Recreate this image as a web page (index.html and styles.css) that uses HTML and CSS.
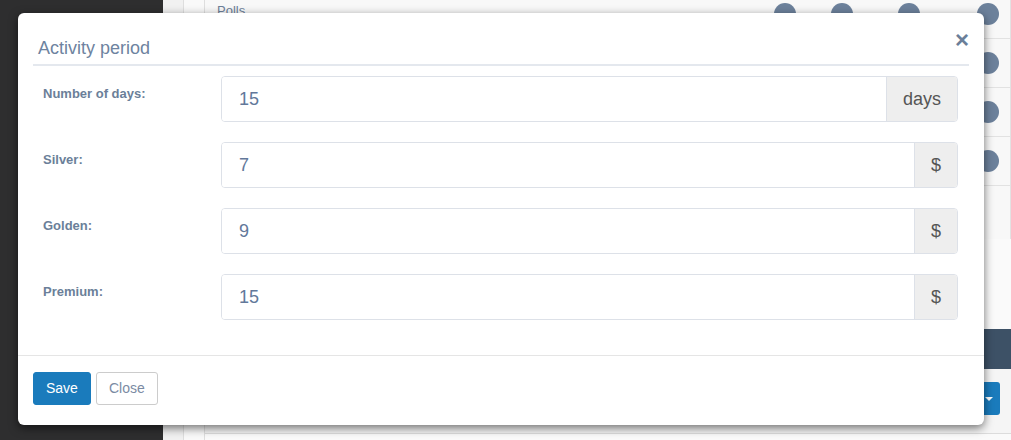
FILE: index.html
```html
<!DOCTYPE html>
<html lang="en">
<head>
<meta charset="UTF-8">
<meta name="viewport" content="width=device-width, initial-scale=1.0">
<title>Activity period</title>
<link rel="stylesheet" href="styles.css">
</head>
<body>

<div class="sidebar"></div>
<div class="main">
  <div class="gutter first"></div>
  <div class="gutter second"></div>
  <div class="content">
    <div class="table">
      <div class="row">
        <span class="row-name">Polls</span>
        <span class="dot d1"></span><span class="dot d2"></span><span class="dot d3"></span><span class="dot d4"></span>
      </div>
      <div class="row">
        <span class="row-name"></span>
        <span class="dot d1"></span><span class="dot d2"></span><span class="dot d3"></span><span class="dot d4"></span>
      </div>
      <div class="row">
        <span class="row-name"></span>
        <span class="dot d1"></span><span class="dot d2"></span><span class="dot d3"></span><span class="dot d4"></span>
      </div>
      <div class="row">
        <span class="row-name"></span>
        <span class="dot d1"></span><span class="dot d2"></span><span class="dot d3"></span><span class="dot d4"></span>
      </div>
      <div class="row last"></div>
    </div>
    <div class="panel-bar"></div>
    <div class="panel-body">
      <button class="drop-btn"><span class="caret"></span></button>
    </div>
  </div>
</div>

<!-- modal window -->
<div class="modal">
  <div class="modal-header">
    <h4 class="modal-title">Activity period</h4>
    <span class="close">&times;</span>
  </div>
  <div class="modal-body">
    <div class="form-row">
      <label class="form-label">Number of days:</label>
      <div class="input-group">
        <input class="form-input" type="text" value="15">
        <span class="addon">days</span>
      </div>
    </div>
    <div class="form-row">
      <label class="form-label">Silver:</label>
      <div class="input-group">
        <input class="form-input" type="text" value="7">
        <span class="addon">$</span>
      </div>
    </div>
    <div class="form-row">
      <label class="form-label">Golden:</label>
      <div class="input-group">
        <input class="form-input" type="text" value="9">
        <span class="addon">$</span>
      </div>
    </div>
    <div class="form-row">
      <label class="form-label">Premium:</label>
      <div class="input-group">
        <input class="form-input" type="text" value="15">
        <span class="addon">$</span>
      </div>
    </div>
  </div>
  <div class="modal-footer">
    <button class="btn btn-primary">Save</button>
    <button class="btn btn-default">Close</button>
  </div>
</div>

</body>
</html>
```

FILE: styles.css
```css
body {
  margin: 0;
  width: 1011px;
  height: 440px;
  overflow: hidden;
  display: flex;
  font-family: "Liberation Sans", Arial, sans-serif;
  background-color: #f5f5f5;
}
.sidebar {
  width: 163px;
  background-color: #2e2e2f;
}
.main {
  flex: 1;
  display: flex;
}
.gutter {
  width: 20px;
  border-right: 1px solid #dedede;
}
.gutter.first {
  background-color: #f1f1f1;
}
.gutter.second {
  background-color: #f9f9f9;
}
.content {
  flex: 1;
  display: flex;
  flex-direction: column;
  background-color: #fafafa;
}
.table {
  margin-top: -10px;
  width: 805px;
  border-right: 1px solid #e2e2e2;
  background-color: #f8f8f8;
}
.row {
  height: 48px;
  border-bottom: 1px solid #e2e2e2;
  display: flex;
  align-items: center;
  padding: 0 11px 0 12px;
}
.row.last {
  height: 53px;
  border-bottom: none;
}
.row-name {
  flex: 1;
  font-size: 13px;
  color: #6d7f98;
  align-self: flex-start;
  padding-top: 13px;
}
.dot {
  width: 22px;
  height: 22px;
  border-radius: 50%;
  background-color: #6c819b;
}
.d2 {
  margin-left: 35px;
}
.d3 {
  margin-left: 45px;
}
.d4 {
  margin-left: 57px;
}
.panel-bar {
  margin-top: 90px;
  height: 40px;
  background-color: #3d5166;
}
.panel-body {
  flex: 1;
  background-color: #f5f5f5;
  border-bottom: 1px solid #dcdcdc;
  margin-bottom: 6px;
  display: flex;
  justify-content: flex-end;
  align-items: flex-start;
  padding: 13px 11px 0 0;
}
.drop-btn {
  width: 28px;
  height: 33px;
  border: none;
  border-radius: 3px;
  background-color: #1a7bbc;
  padding: 0;
  display: flex;
  align-items: center;
  justify-content: flex-end;
  padding-right: 7px;
}
.caret {
  border-top: 4px solid #fff;
  border-left: 4px solid transparent;
  border-right: 4px solid transparent;
}

/* modal */
.modal {
  position: absolute;
  left: 18px;
  top: 13px;
  width: 966px;
  height: 412px;
  box-sizing: border-box;
  background-color: #fff;
  border-radius: 6px;
  box-shadow: 0 3px 10px rgba(0, 0, 0, 0.55);
  display: flex;
  flex-direction: column;
}
.modal-header {
  margin: 0 15px;
  padding: 25px 0 6px 5px;
  border-bottom: 2px solid #e4e8ee;
  display: flex;
  justify-content: space-between;
  align-items: center;
}
.modal-title {
  margin: 0;
  font-size: 18px;
  font-weight: normal;
  line-height: 20px;
  color: #6e83a0;
}
.close {
  font-size: 24px;
  font-weight: bold;
  line-height: 20px;
  color: #6b7f99;
  margin-top: -16px;
  cursor: pointer;
}
.modal-body {
  padding: 10px 26px 35px 25px;
  display: flex;
  flex-direction: column;
  gap: 20px;
}
.form-row {
  display: flex;
  align-items: flex-start;
}
.form-label {
  width: 178px;
  padding-top: 10px;
  font-size: 13px;
  font-weight: bold;
  color: #6b7f99;
}
.input-group {
  flex: 1;
  display: flex;
  height: 46px;
  border: 1px solid #dde1e8;
  border-radius: 4px;
  box-sizing: border-box;
  overflow: hidden;
}
.form-input {
  flex: 1;
  min-width: 0;
  border: none;
  outline: none;
  padding: 0 17px;
  font-family: inherit;
  font-size: 18px;
  color: #62789a;
  background: #fff;
}
.addon {
  display: flex;
  align-items: center;
  padding: 0 16px;
  background-color: #eeeeee;
  border-left: 1px solid #dde1e8;
  font-size: 18px;
  color: #555;
}
.modal-footer {
  margin-top: auto;
  border-top: 1px solid #e5e5e5;
  padding: 16px 15px 20px;
  display: flex;
  gap: 5px;
}
.btn {
  font-family: inherit;
  font-size: 14px;
  line-height: 17px;
  padding: 7px 12px;
  border-radius: 3px;
  cursor: pointer;
}
.btn-primary {
  background-color: #1a7bbc;
  border: 1px solid #1a7bbc;
  color: #fff;
}
.btn-default {
  background-color: #fff;
  border: 1px solid #cccccc;
  color: #7b8ba3;
}
```
